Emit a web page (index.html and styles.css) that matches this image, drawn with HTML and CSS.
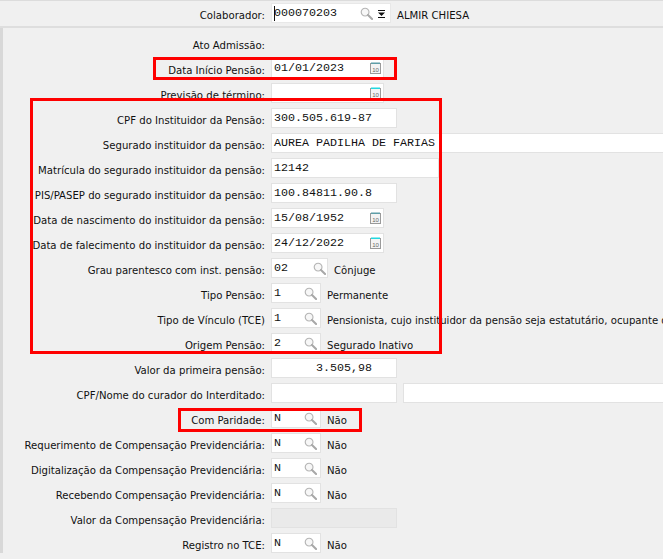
FILE: index.html
```html
<!DOCTYPE html>
<html lang="pt-BR">
<head>
<meta charset="utf-8">
<title>Pensão</title>
<link rel="stylesheet" href="styles.css">
</head>
<body>
<svg class="defs" width="0" height="0" aria-hidden="true">
  <symbol id="lupa" viewBox="0 0 14 14">
    <circle cx="5.500" cy="5.500" r="4.200" fill="#f7f7f7" stroke="#b4b4b4" stroke-width="1.200"/>
    <path d="M8.600 8.600 13 13" stroke="#a8a8a8" stroke-width="2.200" stroke-linecap="round"/>
  </symbol>
  <symbol id="cal" viewBox="0 0 11 12">
    <rect x="0.500" y="1.500" width="10" height="10" fill="#f4f4f4" stroke="#9a9a9a"/>
    <rect x="1" y="0.500" width="9" height="1.500" fill="#5f9ea8"/>
    <text x="5.500" y="9.500" text-anchor="middle" class="cal-text">10</text>
  </symbol>
  <symbol id="calv" viewBox="0 0 11 12">
    <rect x="0.500" y="1.500" width="10" height="10" fill="#f4f4f4" stroke="#9a9a9a"/>
    <rect x="1" y="0.500" width="9" height="1.500" fill="#22d8e0"/>
    <text x="5.500" y="9.500" text-anchor="middle" class="cal-text">10</text>
  </symbol>
</svg>
<div class="page">
  <header class="top">
    <div class="row">
      <label class="lb">Colaborador:</label>
      <div class="box w-col"><span class="caret"></span><span class="val">000070203</span>
        <svg class="ic-lupa top-lupa"><use href="#lupa"/></svg>
        <svg class="ic-arrow" viewBox="0 0 7 8"><path d="M0 0h7v1H0zM0 2.500h7L3.500 6zM0 7h7v1H0z" fill="#111"/></svg>
      </div>
      <span class="desc">ALMIR CHIESA</span>
    </div>
  </header>
  <main class="form">
    <div class="row"><label class="lb">Ato Admissão:</label></div>
    <div class="row"><label class="lb">Data Início Pensão:</label><div class="box w-date"><span class="val">01/01/2023</span><svg class="ic-cal"><use href="#cal"/></svg></div></div>
    <div class="row"><label class="lb">Previsão de término:</label><div class="box w-date"><svg class="ic-cal"><use href="#calv"/></svg></div></div>
    <div class="row"><label class="lb">CPF do Instituidor da Pensão:</label><div class="box w-std"><span class="val">300.505.619-87</span></div></div>
    <div class="row"><label class="lb">Segurado instituidor da pensão:</label><div class="box w-full"><span class="val">AUREA PADILHA DE FARIAS</span></div></div>
    <div class="row"><label class="lb">Matrícula do segurado instituidor da pensão:</label><div class="box w-mat"><span class="val">12142</span></div></div>
    <div class="row"><label class="lb">PIS/PASEP do segurado instituidor da pensão:</label><div class="box w-std"><span class="val">100.84811.90.8</span></div></div>
    <div class="row"><label class="lb">Data de nascimento do instituidor da pensão:</label><div class="box w-date"><span class="val">15/08/1952</span><svg class="ic-cal"><use href="#cal"/></svg></div></div>
    <div class="row"><label class="lb">Data de falecimento do instituidor da pensão:</label><div class="box w-date"><span class="val">24/12/2022</span><svg class="ic-cal"><use href="#calv"/></svg></div></div>
    <div class="row"><label class="lb">Grau parentesco com inst. pensão:</label><div class="box w-grau"><span class="val">02</span><svg class="ic-lupa"><use href="#lupa"/></svg></div><span class="desc">Cônjuge</span></div>
    <div class="row"><label class="lb">Tipo Pensão:</label><div class="box w-look"><span class="val">1</span><svg class="ic-lupa"><use href="#lupa"/></svg></div><span class="desc">Permanente</span></div>
    <div class="row"><label class="lb">Tipo de Vínculo (TCE)</label><div class="box w-look"><span class="val">1</span><svg class="ic-lupa"><use href="#lupa"/></svg></div><span class="desc">Pensionista, cujo instituidor da pensão seja estatutário, ocupante de cargo efetivo</span></div>
    <div class="row"><label class="lb">Origem Pensão:</label><div class="box w-look"><span class="val">2</span><svg class="ic-lupa"><use href="#lupa"/></svg></div><span class="desc">Segurado Inativo</span></div>
    <div class="row"><label class="lb">Valor da primeira pensão:</label><div class="box w-std right"><span class="val">3.505,98</span></div></div>
    <div class="row"><label class="lb">CPF/Nome do curador do Interditado:</label><div class="box w-std"></div><div class="box w-rest"></div></div>
    <div class="row"><label class="lb">Com Paridade:</label><div class="box w-look"><span class="val">N</span><svg class="ic-lupa"><use href="#lupa"/></svg></div><span class="desc">Não</span></div>
    <div class="row"><label class="lb">Requerimento de Compensação Previdenciária:</label><div class="box w-look"><span class="val">N</span><svg class="ic-lupa"><use href="#lupa"/></svg></div><span class="desc">Não</span></div>
    <div class="row"><label class="lb">Digitalização da Compensação Previdenciária:</label><div class="box w-look"><span class="val">N</span><svg class="ic-lupa"><use href="#lupa"/></svg></div><span class="desc">Não</span></div>
    <div class="row"><label class="lb">Recebendo Compensação Previdenciária:</label><div class="box w-look"><span class="val">N</span><svg class="ic-lupa"><use href="#lupa"/></svg></div><span class="desc">Não</span></div>
    <div class="row"><label class="lb">Valor da Compensação Previdenciária:</label><div class="box w-std off"></div></div>
    <div class="row"><label class="lb">Registro no TCE:</label><div class="box w-look"><span class="val">N</span><svg class="ic-lupa"><use href="#lupa"/></svg></div><span class="desc">Não</span></div>
  </main>
  <div class="mark mark-data"></div>
  <div class="mark mark-inst"></div>
  <div class="mark mark-par"></div>
</div>
</body>
</html>
```
FILE: styles.css
```css
* { box-sizing: border-box; }
html, body { margin: 0; padding: 0; height: 100%; overflow: hidden; }
body { background: #f0f0f0; color: #111; font-family: "DejaVu Sans", "Liberation Sans", sans-serif; font-stretch: condensed; font-size: 11.25px; }
.defs { position: absolute; }
.cal-text { font-family: "Liberation Sans", sans-serif; font-size: 6px; fill: #666; }
.page { position: relative; width: 663px; height: 559px; overflow: hidden; border-top: 1px solid #dcdcdc; }
.top { height: 27px; padding-top: 2px; border-bottom: 2px solid #dedede; padding-left: 3px; }
.form { display: flex; flex-direction: column; gap: 5px; padding: 5px 0 0 0; border-left: 3px solid #d8d8d8; }
.row { display: flex; align-items: center; height: 20px; gap: 6px; white-space: nowrap; }
.lb { width: 262px; flex: none; display: flex; justify-content: flex-end; position: relative; top: 2px; }
.desc { flex: none; position: relative; top: 2px; }
.box { position: relative; flex: none; height: 20px; background: #fff; border: 1px solid #e2e2e2; display: flex; align-items: center; padding-left: 2px; font-family: "Liberation Mono", monospace; font-stretch: normal; font-size: 11.67px; color: #111; }
.val { position: relative; }
.w-col { width: 120px; border-color: #e8e8e8; }
.w-date { width: 113px; }
.w-std { width: 126px; }
.w-full { width: 400px; }
.w-mat { width: 168px; }
.w-grau { width: 57px; }
.w-look { width: 50px; }
.w-rest { width: 300px; }
.right { justify-content: flex-end; padding-right: 24px; }
.off { background: #eaeaea; }
.caret { width: 1px; height: 15px; background: #111; margin-right: -1px; }
.ic-lupa { position: absolute; right: 3px; top: 3px; width: 13px; height: 13px; }
.w-grau .ic-lupa { right: 1px; }
.top-lupa { right: 17px; }
.ic-arrow { position: absolute; right: 5px; top: 6px; width: 7px; height: 8px; }
.ic-cal { position: absolute; right: 2px; top: 3px; width: 11px; height: 12px; }
.mark { position: absolute; border: 3px solid #fe0000; }
.mark-data { left: 153px; top: 56px; width: 244px; height: 23px; }
.mark-inst { left: 30px; top: 97px; width: 412px; height: 256px; }
.mark-par { left: 178px; top: 407px; width: 184px; height: 24px; }
```
